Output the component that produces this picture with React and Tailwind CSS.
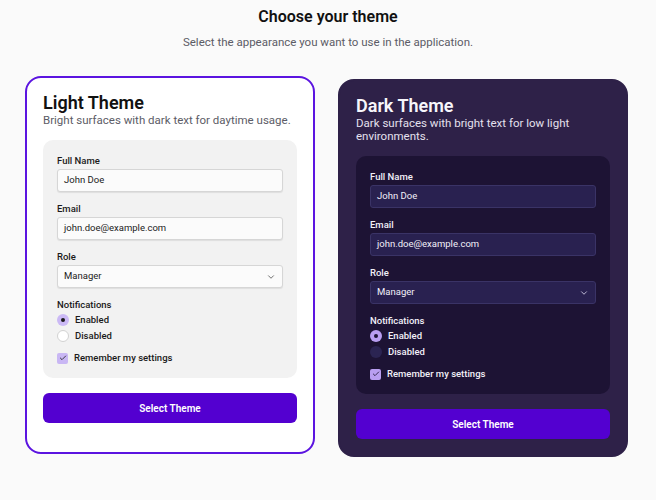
import { ChevronDown, Check } from "lucide-react";

const themes = {
  light: {
    card: "bg-white border-2 border-[#5b14e0] -translate-y-[3px]",
    title: "text-[#111111]",
    sub: "text-[#5c5c66]",
    panel: "bg-[#f2f2f2]",
    label: "text-[#1a1a1a]",
    input: "bg-[#fbfbfb] border border-[#d6d6d6] shadow-[0_1px_1px_rgba(0,0,0,0.08)] text-[#222]",
    chevron: "text-[#555]",
    radioOn: "bg-[#cbb9f5]",
    dot: "bg-[#1a1a1a]",
    radioOff: "bg-white border border-[#d2d2d2]",
    option: "text-[#1a1a1a]",
    check: "bg-[#c9b7f4] text-[#222]",
  },
  dark: {
    card: "bg-[#2e2148] border-2 border-[#2e2148]",
    title: "text-[#f7f6fb]",
    sub: "text-[#e4e0ee]",
    panel: "bg-[#1d1334]",
    label: "text-[#f2f0f8]",
    input: "bg-[#292150] border border-[#3a3366] text-[#f2f0f8]",
    chevron: "text-[#d9d4ec]",
    radioOn: "bg-[#b99ef1]",
    dot: "bg-[#1d1334]",
    radioOff: "bg-[#2b2452]",
    option: "text-[#f2f0f8]",
    check: "bg-[#b99ef1] text-[#1d1334]",
  },
};

function Field({ t, label, children }) {
  return (
    <div className="flex flex-col">
      <span className={`text-[9.5px] leading-[14px] font-medium ${t.label}`}>{label}</span>
      <div className={`mt-[1px] h-[23px] rounded-[3px] px-[6px] flex items-center justify-between text-[9.5px] ${t.input}`}>
        {children}
      </div>
    </div>
  );
}

function ThemeCard({ kind, title, description }) {
  const t = themes[kind];
  return (
    <div className={`rounded-[16px] px-4 pt-[14px] pb-4 flex flex-col ${t.card}`}>
      <h2 className={`text-[18px] leading-[22px] font-semibold ${t.title}`}>{title}</h2>
      <p className={`text-[11.5px] leading-[13px] ${t.sub}`}>{description}</p>
      <div className={`mt-[13px] rounded-[10px] px-[14px] pt-[14px] pb-[12px] flex flex-col gap-[10px] ${t.panel}`}>
        <Field t={t} label="Full Name">
          <span>John Doe</span>
        </Field>
        <Field t={t} label="Email">
          <span>john.doe@example.com</span>
        </Field>
        <Field t={t} label="Role">
          <span>Manager</span>
          <ChevronDown size={10} strokeWidth={2} className={t.chevron} />
        </Field>
        <div className="flex flex-col">
          <span className={`text-[9.5px] leading-[14px] font-medium ${t.label}`}>Notifications</span>
          <div className="flex items-center gap-[6px] h-4">
            <span className={`w-3 h-3 rounded-full flex items-center justify-center ${t.radioOn}`}>
              <span className={`w-[4px] h-[4px] rounded-full ${t.dot}`} />
            </span>
            <span className={`text-[9.5px] font-medium ${t.option}`}>Enabled</span>
          </div>
          <div className="flex items-center gap-[6px] h-4">
            <span className={`w-3 h-3 rounded-full ${t.radioOff}`} />
            <span className={`text-[9.5px] font-medium ${t.option}`}>Disabled</span>
          </div>
          <div className="flex items-center gap-[6px] h-4 mt-[6px]">
            <span className={`w-[11px] h-[11px] rounded-[2px] flex items-center justify-center ${t.check}`}>
              <Check size={8} strokeWidth={2.5} />
            </span>
            <span className={`text-[9.5px] font-medium ${t.option}`}>Remember my settings</span>
          </div>
        </div>
      </div>
      <button className="mt-[15px] h-[30px] rounded-[6px] bg-[#5300d0] text-white text-[10px] font-semibold">
        Select Theme
      </button>
    </div>
  );
}

export default function App() {
  return (
    <div className="min-h-[500px] bg-[#fafafa] font-['Roboto',sans-serif] pt-[5px]">
      <div className="text-center">
        <h1 className="text-[16px] leading-[24px] font-semibold text-[#111]">Choose your theme</h1>
        <p className="mt-[5px] text-[11.5px] leading-[16px] text-[#5c5c66]">
          Select the appearance you want to use in the application.
        </p>
      </div>
      <div className="mt-[29px] w-[603px] ml-[25px] grid grid-cols-2 gap-[23px]">
        <ThemeCard kind="light" title="Light Theme" description="Bright surfaces with dark text for daytime usage." />
        <ThemeCard kind="dark" title="Dark Theme" description="Dark surfaces with bright text for low light environments." />
      </div>
    </div>
  );
}
